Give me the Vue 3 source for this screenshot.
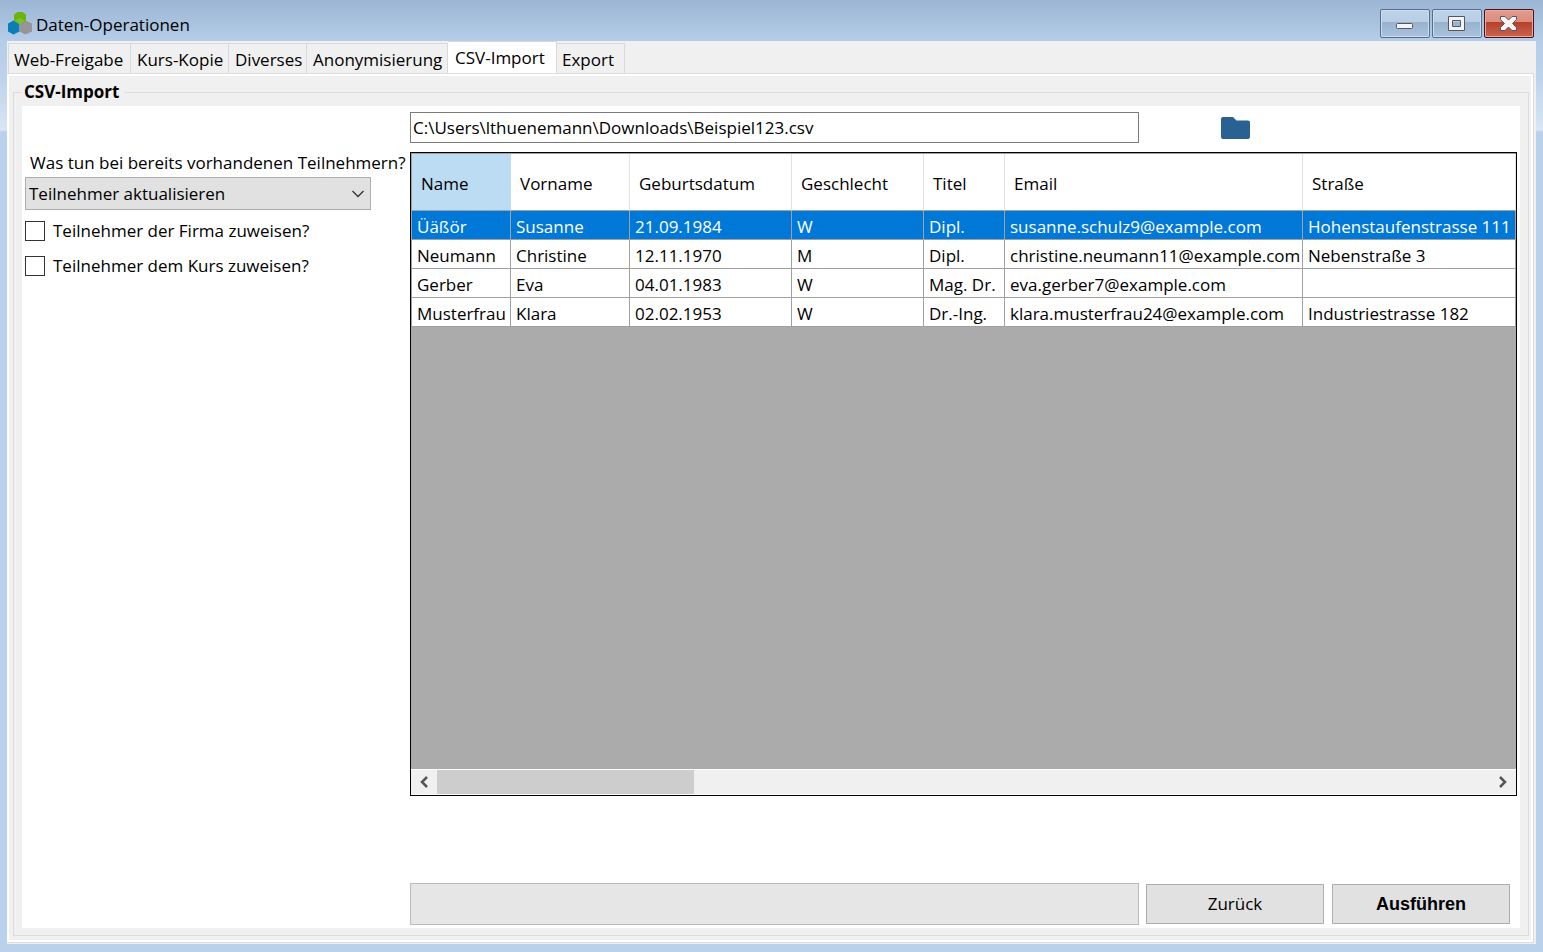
<script setup>
import { ref } from 'vue'

const tabs = [
  { label: 'Web-Freigabe', width: 123 },
  { label: 'Kurs-Kopie', width: 98 },
  { label: 'Diverses', width: 78 },
  { label: 'Anonymisierung', width: 141 },
  { label: 'CSV-Import', width: 109 },
  { label: 'Export', width: 68 },
]
const activeTab = ref('CSV-Import')

const path = ref('C:\\Users\\lthuenemann\\Downloads\\Beispiel123.csv')
const mode = ref('Teilnehmer aktualisieren')
const assignCompany = ref(false)
const assignCourse = ref(false)

const columns = [
  { label: 'Name', width: 99 },
  { label: 'Vorname', width: 119 },
  { label: 'Geburtsdatum', width: 162 },
  { label: 'Geschlecht', width: 132 },
  { label: 'Titel', width: 81 },
  { label: 'Email', width: 298 },
  { label: 'Straße', width: 213 },
]
const rows = [
  ['Üäßör', 'Susanne', '21.09.1984', 'W', 'Dipl.', 'susanne.schulz9@example.com', 'Hohenstaufenstrasse 111'],
  ['Neumann', 'Christine', '12.11.1970', 'M', 'Dipl.', 'christine.neumann11@example.com', 'Nebenstraße 3'],
  ['Gerber', 'Eva', '04.01.1983', 'W', 'Mag. Dr.', 'eva.gerber7@example.com', ''],
  ['Musterfrau', 'Klara', '02.02.1953', 'W', 'Dr.-Ing.', 'klara.musterfrau24@example.com', 'Industriestrasse 182'],
]
const selected = ref(0)
</script>

<template>
  <div class="window">
    <header class="titlebar">
      <svg class="logo" width="26" height="26" viewBox="0 0 26 26" aria-hidden="true">
        <path d="M1 12.500 6.500 9.500l6 3v8L6.500 23.500 1 20.500z" fill="#0a7fb5" />
        <path d="M12.500 12.500l6-3 6.500 3v8l-6.500 3-6-3z" fill="#989599" />
        <path d="M7 3.500l3.500-2.500h5L19 3.500v6.500L13 13.500 7 10z" fill="#69b50d" />
        <path d="M8 9.500l4.500-2.500 5.500 2.500L13 13.500z" fill="#7cc032" />
      </svg>
      <h1 class="title">Daten-Operationen</h1>
      <div class="controls">
        <button class="ctl" type="button" aria-label="Minimieren">
          <svg width="20" height="20" viewBox="0 0 20 20"><rect x="1.500" y="9.500" width="16" height="5" rx="1" fill="#f4f4f4" stroke="#535666" /></svg>
        </button>
        <button class="ctl" type="button" aria-label="Maximieren">
          <svg width="20" height="20" viewBox="0 0 20 20"><path d="M1.500 2.500h16v14h-16zM5.500 6.500v6h8v-6z" fill="#f4f4f4" fill-rule="evenodd" stroke="#535666" /></svg>
        </button>
        <button class="ctl close" type="button" aria-label="Schließen">
          <svg width="20" height="20" viewBox="0 0 20 20"><path d="M1.500 2.500h4.500l3.500 3.500 3.500-3.500h4.500v3l-4 4 4 4v3h-4.500l-3.500-3.500-3.500 3.500h-4.500v-3l4-4-4-4z" fill="#f4f4f4" stroke="#535666" stroke-linejoin="round" /></svg>
        </button>
      </div>
    </header>

    <main class="client">
      <nav class="tabs" role="tablist">
        <button
          v-for="t in tabs"
          :key="t.label"
          type="button"
          role="tab"
          class="tab"
          :class="{ active: t.label === activeTab }"
          :aria-selected="t.label === activeTab"
          :style="{ width: t.width + 'px' }"
          @click="activeTab = t.label"
        >{{ t.label }}</button>
      </nav>

      <section class="page">
        <fieldset class="group">
          <legend>CSV-Import</legend>
          <div class="content">
            <div class="options">
              <label class="question" for="mode">Was tun bei bereits vorhandenen Teilnehmern?</label>
              <div class="select-wrap">
                <select id="mode" v-model="mode">
                  <option>Teilnehmer aktualisieren</option>
                </select>
                <svg class="chevron" width="12" height="8" viewBox="0 0 12 8" aria-hidden="true"><path d="M.5 1l5.500 5.500L11.500 1" fill="none" stroke="#333" stroke-width="1.300" /></svg>
              </div>
              <label class="check"><input v-model="assignCompany" type="checkbox"><span>Teilnehmer der Firma zuweisen?</span></label>
              <label class="check"><input v-model="assignCourse" type="checkbox"><span>Teilnehmer dem Kurs zuweisen?</span></label>
            </div>

            <div class="work">
              <div class="line">
                <input v-model="path" class="path" type="text" aria-label="Datei">
                <button class="browse" type="button" aria-label="Datei wählen">
                  <svg width="29" height="22" viewBox="0 0 29 22"><path d="M2 0h10l3.500 3.500H27a2 2 0 0 1 2 2V20a2 2 0 0 1-2 2H2a2 2 0 0 1-2-2V2a2 2 0 0 1 2-2z" fill="#296292" /></svg>
                </button>
              </div>

              <div class="grid">
                <div class="viewport">
                  <table>
                    <colgroup>
                      <col v-for="c in columns" :key="c.label" :style="{ width: c.width + 'px' }">
                    </colgroup>
                    <thead>
                      <tr>
                        <th v-for="(c, i) in columns" :key="c.label" scope="col" :class="{ current: i === 0 }">{{ c.label }}</th>
                      </tr>
                    </thead>
                    <tbody>
                      <tr v-for="(r, i) in rows" :key="i" :class="{ selected: i === selected }" @click="selected = i">
                        <td v-for="(v, j) in r" :key="j">{{ v }}</td>
                      </tr>
                    </tbody>
                  </table>
                </div>
                <div class="scrollbar">
                  <button type="button" class="arrow" aria-label="Nach links">
                    <svg width="10" height="12" viewBox="0 0 10 12"><path d="M8 1L3 6l5 5" fill="none" stroke="#555" stroke-width="2.500" /></svg>
                  </button>
                  <div class="track"><div class="thumb"></div></div>
                  <button type="button" class="arrow" aria-label="Nach rechts">
                    <svg width="10" height="12" viewBox="0 0 10 12"><path d="M2 1l5 5-5 5" fill="none" stroke="#555" stroke-width="2.500" /></svg>
                  </button>
                </div>
              </div>

              <div class="line footer">
                <div class="progress" role="progressbar" aria-label="Fortschritt"></div>
                <div class="actions">
                  <button class="action" type="button">Zurück</button>
                  <button class="action primary" type="button">Ausführen</button>
                </div>
              </div>
            </div>
          </div>
        </fieldset>
      </section>
    </main>
  </div>
</template>

<style>
body {
  margin: 0;
}
</style>

<style scoped>
* {
  box-sizing: border-box;
}

.window {
  display: flex;
  flex-direction: column;
  min-height: 100vh;
  padding: 0 7px 8px;
  background: linear-gradient(#9bb5d3 0, #b5cde8 41px, #bed3eb 80px, #d9e6f5 130px, #b9d1ea 132px);
  color: #000;
  font-family: "Open Sans", "Noto Sans", sans-serif;
  font-size: 17px;
  line-height: 24px;
}

button,
input,
select {
  margin: 0;
  padding: 0;
  border: 0;
  border-radius: 0;
  background: none;
  color: inherit;
  font: inherit;
}

.titlebar {
  display: flex;
  align-items: flex-start;
  height: 41px;
}

.logo {
  margin-top: 11px;
}

.title {
  flex: 1;
  margin: 13px 0 0 3px;
  font-size: 17px;
  font-weight: 400;
}

.controls {
  display: flex;
  gap: 2px;
  margin: 9px 2px 0 0;
}

.ctl {
  display: flex;
  align-items: center;
  justify-content: center;
  width: 50px;
  height: 29px;
  border: 1px solid #566e90;
  border-radius: 2px;
  background: linear-gradient(#bfd3e8 0, #b8cee5 12px, #98b1cd 12px, #a9c2dd 100%);
  box-shadow: inset 0 0 0 1px #cbdcee;
}

.ctl.close {
  border-color: #4d1220;
  background: linear-gradient(#e29c8f 0, #dc8b7c 12px, #b5402a 12px, #cb6350 100%);
  box-shadow: inset 0 0 0 1px #e5a99e;
}

.client {
  display: flex;
  flex: 1;
  flex-direction: column;
  padding: 0 2px 1px 0;
  background: #f0f0f0;
}

.tabs {
  display: flex;
  align-items: flex-end;
  height: 32px;
  padding-left: 1px;
}

.tab {
  height: 30px;
  padding: 2px 0 0 6px;
  border: 1px solid #d9d9d9;
  border-width: 1px 1px 0 0;
  background: #f0f0f0;
  text-align: left;
  white-space: nowrap;
}

.tab:first-child {
  padding-left: 5px;
  border-left-width: 1px;
}

.tab:last-child {
  padding-left: 5px;
}

.tab.active {
  height: 33px;
  margin-bottom: -1px;
  padding: 0 0 1px 7px;
  background: #fff;
}

.page {
  display: flex;
  flex: 1;
  border: 1px solid #dcdcdc;
  border-left-width: 0;
  background: #f0f0f0;
  box-shadow: inset 0 0 0 2px #fff;
}

.group {
  display: flex;
  flex: 1;
  min-width: 0;
  margin: 6px 4px 6px 6px;
  padding: 2px 8px 7px;
  border: 1px solid #dcdcdc;
}

legend {
  padding: 0 5px 0 2px;
  font-weight: 700;
}

.content {
  display: flex;
  width: 100%;
  height: 100%;
  padding-bottom: 3px;
  background: #fff;
}

.options {
  flex: 0 0 388px;
  padding: 45px 0 0 3px;
}

.question {
  display: block;
  padding-left: 5px;
  white-space: nowrap;
}

.select-wrap {
  position: relative;
  width: 346px;
  margin: 2px 0 8px;
}

select {
  display: block;
  width: 100%;
  height: 33px;
  padding: 0 3px;
  border: 1px solid #adadad;
  background: #e1e1e1;
  appearance: none;
}

.chevron {
  position: absolute;
  top: 13px;
  right: 7px;
  pointer-events: none;
}

.check {
  display: flex;
  align-items: center;
  gap: 8px;
  height: 25px;
  margin-bottom: 10px;
}

.check input {
  width: 20px;
  height: 20px;
  border: 1px solid #333;
  background: #fff;
  appearance: none;
}

.check input:checked {
  background: #333;
  box-shadow: inset 0 0 0 4px #fff;
}

.work {
  display: flex;
  flex: 1;
  flex-direction: column;
  min-width: 0;
  padding: 6px 3px 0 0;
}

.line {
  display: flex;
  gap: 7px;
  align-items: center;
  padding-right: 7px;
}

.path {
  flex: 1;
  height: 31px;
  padding: 0 2px;
  border: 1px solid #7a7a7a;
  background: #fff;
}

.browse {
  display: flex;
  align-items: center;
  justify-content: center;
  width: 178px;
  height: 31px;
  margin-right: 186px;
}

.grid {
  display: flex;
  flex: 1;
  flex-direction: column;
  margin-top: 9px;
  border: 1px solid #000;
  background: #ababab;
}

.viewport {
  flex: 1;
  overflow: hidden;
}

table {
  width: 100%;
  border-top: 1px solid #a0a0a0;
  border-left: 1px solid #a0a0a0;
  border-collapse: separate;
  border-spacing: 0;
  table-layout: fixed;
}

th {
  height: 57px;
  padding: 3px 0 0 9px;
  border-right: 1px solid #e2e2e2;
  border-bottom: 1px solid #a0a0a0;
  background: #fff;
  font-weight: 400;
  text-align: left;
}

th.current {
  border-right-color: #bcdcf4;
  background: #bcdcf4;
}

td {
  height: 29px;
  padding: 4px 0 0 5px;
  border-right: 1px solid #a0a0a0;
  border-bottom: 1px solid #a0a0a0;
  background: #fff;
  white-space: nowrap;
}

.selected td {
  background: #0078d7;
  color: #fff;
}

.scrollbar {
  display: flex;
  height: 26px;
  border: 1px solid #fff;
  border-width: 1px 0;
  background: #f0f0f0;
}

.arrow {
  display: flex;
  align-items: center;
  justify-content: center;
  width: 26px;
}

.track {
  flex: 1;
}

.thumb {
  width: 24.4%;
  height: 100%;
  background: #cdcdcd;
}

.footer {
  margin-top: 87px;
}

.progress {
  flex: 1;
  height: 42px;
  border: 1px solid #bcbcbc;
  background: #e6e6e6;
}

.actions {
  display: flex;
  gap: 8px;
}

.action {
  width: 178px;
  height: 40px;
  border: 1px solid #adadad;
  background: #e1e1e1;
}

.primary {
  font-family: "Liberation Sans", sans-serif;
  font-size: 18px;
  font-weight: 700;
}
</style>
